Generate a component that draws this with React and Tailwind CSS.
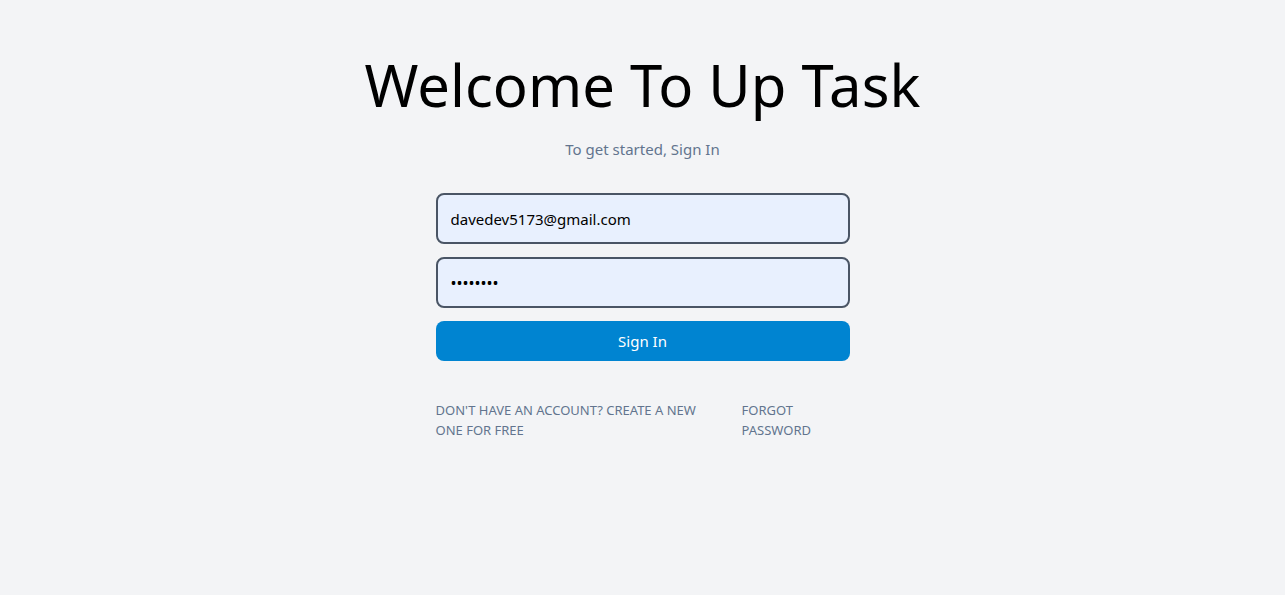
export default function App() {
  return (
    <div
      className="min-h-screen bg-gray-100 flex flex-col items-center pt-[56px]"
      style={{ fontFamily: '"Noto Sans", "Open Sans", sans-serif' }}
    >
      <h1 className="text-[58px] text-black leading-none">Welcome To Up Task</h1>
      <p className="mt-[23px] text-[15px] leading-6 text-slate-500">To get started, Sign In</p>

      <form className="mt-[32px] w-[414px] flex flex-col gap-[13px]">
        <input
          type="email"
          defaultValue="davedev5173@gmail.com"
          className="w-full h-[51px] px-[13px] border-2 border-gray-600 rounded-lg bg-[#e8f0fe] text-black text-[15px] outline-none"
        />
        <input
          type="password"
          defaultValue="password"
          className="w-full h-[51px] px-[13px] border-2 border-gray-600 rounded-lg bg-[#e8f0fe] text-black text-base outline-none"
        />
        <button
          type="button"
          className="w-full h-[40px] rounded-lg bg-sky-600 text-white text-[15px]"
        >
          Sign In
        </button>
      </form>

      <div className="mt-[39px] w-[414px] flex gap-[24px] text-[13px] uppercase text-slate-500 leading-5">
        <a href="#" className="w-[282px]">Don't have an account? Create a new one for free</a>
        <a href="#" className="w-[90px]">Forgot password</a>
      </div>
    </div>
  );
}
